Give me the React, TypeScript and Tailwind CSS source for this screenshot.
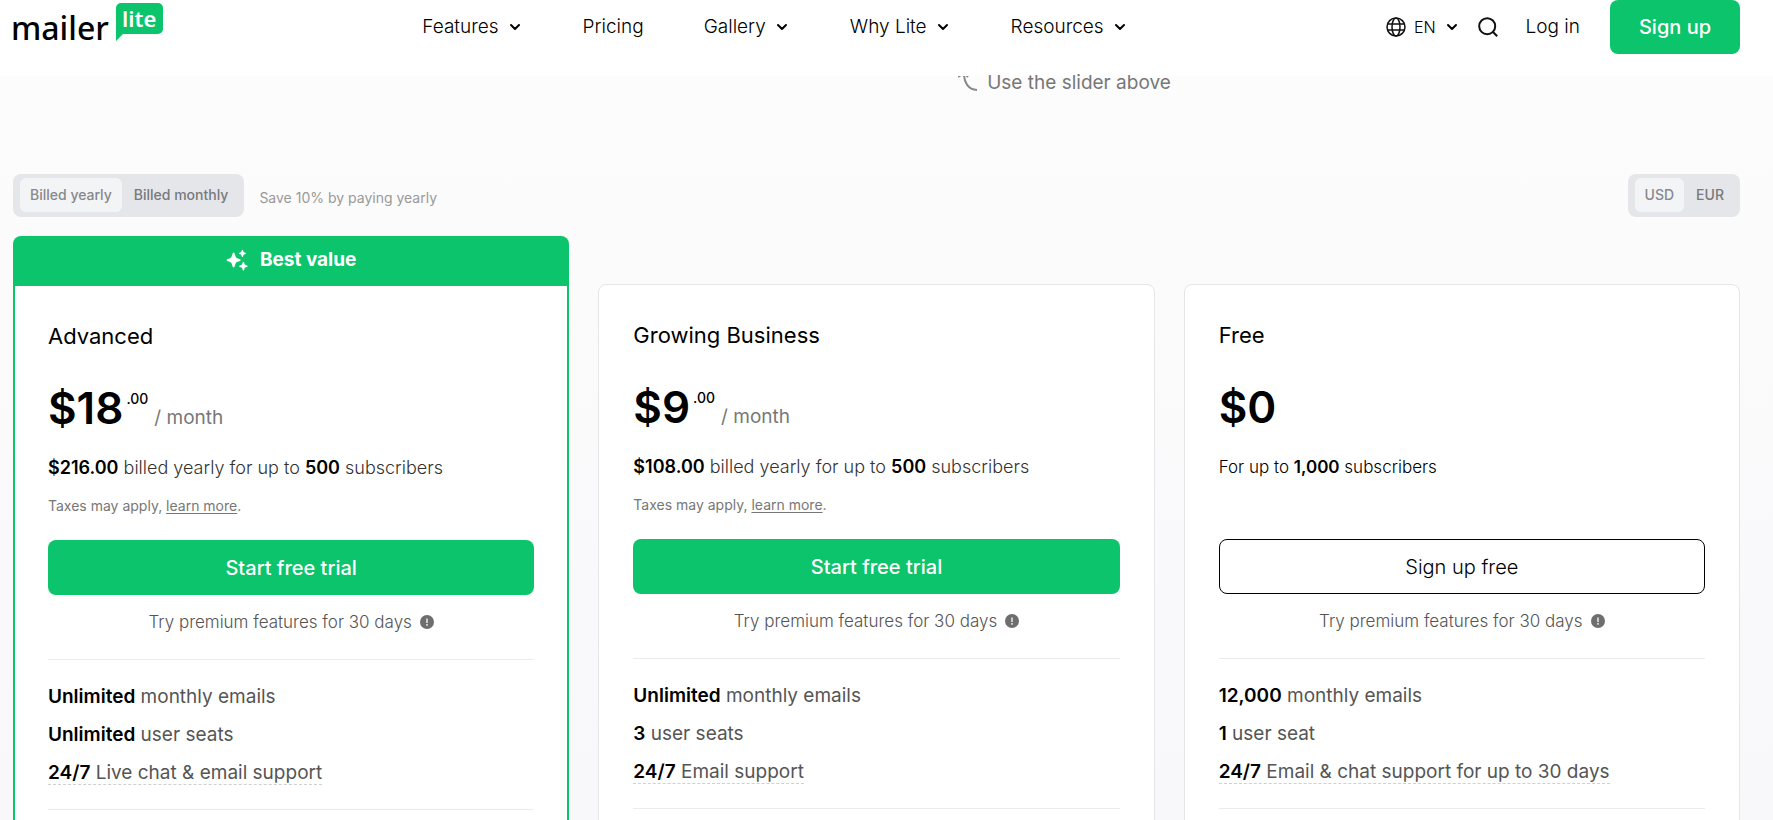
import React, { useState } from "react";
import { ChevronDown } from "lucide-react";

type Feature = { strong: string; text: string; hint?: boolean };

type Plan = {
  name: string;
  price: string;
  cents?: string;
  yearly?: string;
  subscribers: string;
  cta: string;
  best?: boolean;
  features: Feature[];
};

const plans: Plan[] = [
  {
    name: "Advanced",
    price: "$18",
    cents: ".00",
    yearly: "$216.00",
    subscribers: "500",
    cta: "Start free trial",
    best: true,
    features: [
      { strong: "Unlimited", text: "monthly emails" },
      { strong: "Unlimited", text: "user seats" },
      { strong: "24/7", text: "Live chat & email support", hint: true },
    ],
  },
  {
    name: "Growing Business",
    price: "$9",
    cents: ".00",
    yearly: "$108.00",
    subscribers: "500",
    cta: "Start free trial",
    features: [
      { strong: "Unlimited", text: "monthly emails" },
      { strong: "3", text: "user seats" },
      { strong: "24/7", text: "Email support", hint: true },
    ],
  },
  {
    name: "Free",
    price: "$0",
    subscribers: "1,000",
    cta: "Sign up free",
    features: [
      { strong: "12,000", text: "monthly emails" },
      { strong: "1", text: "user seat" },
      { strong: "24/7", text: "Email & chat support for up to 30 days", hint: true },
    ],
  },
];

const navItems = [
  { label: "Features", menu: true },
  { label: "Pricing", menu: false },
  { label: "Gallery", menu: true },
  { label: "Why Lite", menu: true },
  { label: "Resources", menu: true },
];

function Logo() {
  return (
    <svg
      width="151"
      height="50"
      viewBox="0 0 151 50"
      className="overflow-visible"
      role="img"
      aria-label="mailer lite"
    >
      <path d="M108 3h37a5 5 0 0 1 5 5v21a5 5 0 0 1-5 5h-35l-7 7V8a5 5 0 0 1 5-5z" fill="#0bc46b" />
      <text x="-2" y="40" className="font-['Noto_Sans'] text-[32px] font-medium" fill="#000">
        mailer
      </text>
      <text x="109" y="27" className="font-['Noto_Sans'] text-[22px] font-semibold" fill="#fff">
        lite
      </text>
    </svg>
  );
}

function GlobeIcon() {
  return (
    <svg width="20" height="20" viewBox="0 0 20 20" fill="none" stroke="#111" strokeWidth="1.5" aria-hidden="true">
      <circle cx="10" cy="10" r="9" />
      <ellipse cx="10" cy="10" rx="4" ry="9" />
      <path d="M1.7 7h16.6M1.7 13h16.6" />
    </svg>
  );
}

function SearchIcon() {
  return (
    <svg width="20" height="20" viewBox="0 0 20 20" fill="none" stroke="#111" strokeWidth="2" aria-hidden="true">
      <circle cx="9.2" cy="9.2" r="8" />
      <path d="M14.8 14.8l4.4 4.4" />
    </svg>
  );
}

function SparklesIcon() {
  return (
    <svg width="22" height="22" viewBox="0 0 22 22" fill="#fff" aria-hidden="true">
      <path d="M7.6 3.4c.5 0 .7.3.9.8l1.3 3.9c.1.4.4.7.8.8l3.4 1.3c.9.4.9 1.4 0 1.7l-3.4 1.3c-.4.1-.7.4-.8.8l-1.3 3.7c-.3.9-1.5.9-1.8 0l-1.3-3.7c-.1-.4-.4-.7-.8-.8L1.2 11.9c-.9-.3-.9-1.3 0-1.7l3.4-1.3c.4-.1.7-.4.8-.8l1.3-3.9c.2-.5.4-.8.9-.8z" />
      <path d="M16.4.8c.3 0 .5.2.6.5l.5 1.4c.1.2.3.4.5.5l1.4.5c.7.2.7 1 0 1.2l-1.4.5c-.2.1-.4.3-.5.5L17 7.4c-.2.7-1 .7-1.2 0l-.5-1.5c-.1-.2-.3-.4-.5-.5l-1.4-.5c-.7-.2-.7-1 0-1.2l1.4-.5c.2-.1.4-.3.5-.5l.5-1.4c.1-.3.3-.5.6-.5z" />
      <path d="M17.4 12.8c.4 0 .6.2.7.6l.6 1.8c.1.3.3.5.6.6l1.7.6c.8.3.8 1.2 0 1.5l-1.7.6c-.3.1-.5.3-.6.6l-.6 1.8c-.2.8-1.2.8-1.4 0l-.6-1.8c-.1-.3-.3-.5-.6-.6l-1.7-.6c-.8-.3-.8-1.2 0-1.5l1.7-.6c.3-.1.5-.3.6-.6l.6-1.8c.1-.4.3-.6.7-.6z" />
    </svg>
  );
}

function InfoIcon() {
  return (
    <svg width="14" height="14" viewBox="0 0 14 14" aria-hidden="true">
      <circle cx="7" cy="7" r="7" fill="#6e6e6e" />
      <path d="M7 3.5v4.5M7 9v1.8" stroke="#fff" strokeWidth="1.3" />
    </svg>
  );
}

function Segmented({ label, options }: { label: string; options: string[] }) {
  const [active, setActive] = useState(options[0]);
  return (
    <div role="group" aria-label={label} className="flex rounded-lg bg-[#e5e6ea] px-[7px] pt-1 pb-[5px]">
      {options.map((option) => (
        <button
          key={option}
          type="button"
          aria-pressed={option === active}
          onClick={() => setActive(option)}
          className={
            option === active
              ? "h-[34px] rounded-md bg-[#f3f4f6] px-[10px] text-sm font-medium text-[#87898c]"
              : "h-[34px] rounded-md pr-[9px] pl-3 text-sm font-medium text-[#77797c]"
          }
        >
          {option}
        </button>
      ))}
    </div>
  );
}

function PlanCard({ plan }: { plan: Plan }) {
  return (
    <article className="flex min-w-0 flex-col">
      {plan.best ? (
        <div className="flex h-12 items-center justify-center gap-3 rounded-t-lg bg-[#0bc46b] text-[19px] font-bold text-white">
          <SparklesIcon />
          Best value
        </div>
      ) : (
        <div className="h-12" />
      )}
      <div
        className={
          plan.best
            ? "flex-1 border-2 border-[#0bc46b] bg-white px-[33px] pb-8"
            : "flex-1 rounded-t-lg border border-[#e5e6ea] bg-white px-[34px] pb-8"
        }
      >
        <h2 className="pt-[34px] text-[22px] leading-8 text-black">{plan.name}</h2>
        <div className="mt-8 flex h-12 items-end">
          <span className="text-[44px] leading-[48px] font-semibold text-black">{plan.price}</span>
          {plan.cents && (
            <>
              <span className="self-start pt-[5px] pl-[3px] text-sm font-medium text-black">{plan.cents}</span>
              <span className="pl-[6px] text-[19px] leading-[28px] text-[#777]">/ month</span>
            </>
          )}
        </div>
        {plan.yearly ? (
          <p className="mt-6 text-lg leading-6 font-light text-[#333]">
            <strong className="font-semibold text-black">{plan.yearly}</strong> billed yearly for up to{" "}
            <strong className="font-semibold text-black">{plan.subscribers}</strong> subscribers
          </p>
        ) : (
          <p className="mt-6 text-[17px] leading-6 font-light text-black">
            For up to <strong className="font-semibold">{plan.subscribers}</strong> subscribers
          </p>
        )}
        <p className="mt-4 h-5 text-sm leading-5 text-[#777]">
          {plan.yearly && (
            <>
              Taxes may apply,{" "}
              <a href="#taxes" className="underline underline-offset-2">
                learn more
              </a>
              .
            </>
          )}
        </p>
        <button
          type="button"
          className={
            plan.yearly
              ? "mt-6 h-[55px] w-full rounded-lg bg-[#0bc46b] text-xl font-medium text-white"
              : "mt-6 h-[55px] w-full rounded-lg border border-black bg-white text-xl font-light text-black"
          }
        >
          {plan.cta}
        </button>
        <p className="mt-[15px] flex items-center justify-center gap-2 text-[17px] leading-6 font-light text-[#555]">
          Try premium features for 30 days
          <InfoIcon />
        </p>
        <ul className="mt-[25px] flex flex-col gap-[6px] border-y border-[#ececee] pt-[21px] pb-5">
          {plan.features.map((feature) => (
            <li key={feature.text} className="h-8 text-[19px] leading-8 text-[#555]">
              <span className={feature.hint ? "border-b border-dashed border-[#cfcfd6]" : ""}>
                <strong className="font-semibold text-black">{feature.strong}</strong> {feature.text}
              </span>
            </li>
          ))}
        </ul>
      </div>
    </article>
  );
}

export default function App() {
  return (
    <div className="flex h-screen flex-col overflow-hidden bg-white font-[Inter,sans-serif]">
      <header className="flex h-[76px] shrink-0 items-start justify-between bg-white pr-[33px] pl-[13px]">
        <a href="#home">
          <Logo />
        </a>
        <nav aria-label="Main" className="flex h-[54px] items-center gap-[60px] text-[19px] font-light text-black">
          {navItems.map((item) =>
            item.menu ? (
              <button key={item.label} type="button" className="flex items-center gap-2">
                {item.label}
                <ChevronDown size={16} strokeWidth={3} />
              </button>
            ) : (
              <a key={item.label} href="#pricing">
                {item.label}
              </a>
            ),
          )}
        </nav>
        <div className="flex h-[54px] items-center text-[19px] font-light text-black">
          <button type="button" className="flex items-center text-base">
            <GlobeIcon />
            <span className="px-2">EN</span>
            <ChevronDown size={16} strokeWidth={3} />
          </button>
          <button type="button" aria-label="Search" className="ml-[18px]">
            <SearchIcon />
          </button>
          <a href="#login" className="ml-7">
            Log in
          </a>
          <a
            href="#signup"
            className="ml-[30px] flex h-[54px] w-[130px] items-center justify-center rounded-lg bg-[#0bc46b] text-xl font-medium text-white"
          >
            Sign up
          </a>
        </div>
      </header>

      <main className="flex min-h-0 flex-1 flex-col bg-linear-to-b from-[#fcfcfc] to-[#f8f8fb] pr-[33px] pl-[13px]">
        <div className="flex items-start justify-center gap-[10px] pl-[376px] text-[19px] leading-[14px] text-[#777]">
          <svg width="19" height="15" viewBox="0 0 19 15" fill="none" stroke="#888" strokeWidth="2" aria-hidden="true">
            <path d="M0 1l3-2M6-2c0 8 4 15.500 13 16M8-1l2 2" />
          </svg>
          Use the slider above
        </div>

        <div className="mt-[83px] flex items-start justify-between">
          <div className="flex items-center gap-[15px]">
            <Segmented label="Billing period" options={["Billed yearly", "Billed monthly"]} />
            <span className="pt-1 text-sm text-[#999]">Save 10% by paying yearly</span>
          </div>
          <Segmented label="Currency" options={["USD", "EUR"]} />
        </div>

        <section aria-label="Plans" className="mt-[19px] grid flex-1 grid-cols-3 gap-[29px]">
          {plans.map((plan) => (
            <PlanCard key={plan.name} plan={plan} />
          ))}
        </section>
      </main>
    </div>
  );
}
